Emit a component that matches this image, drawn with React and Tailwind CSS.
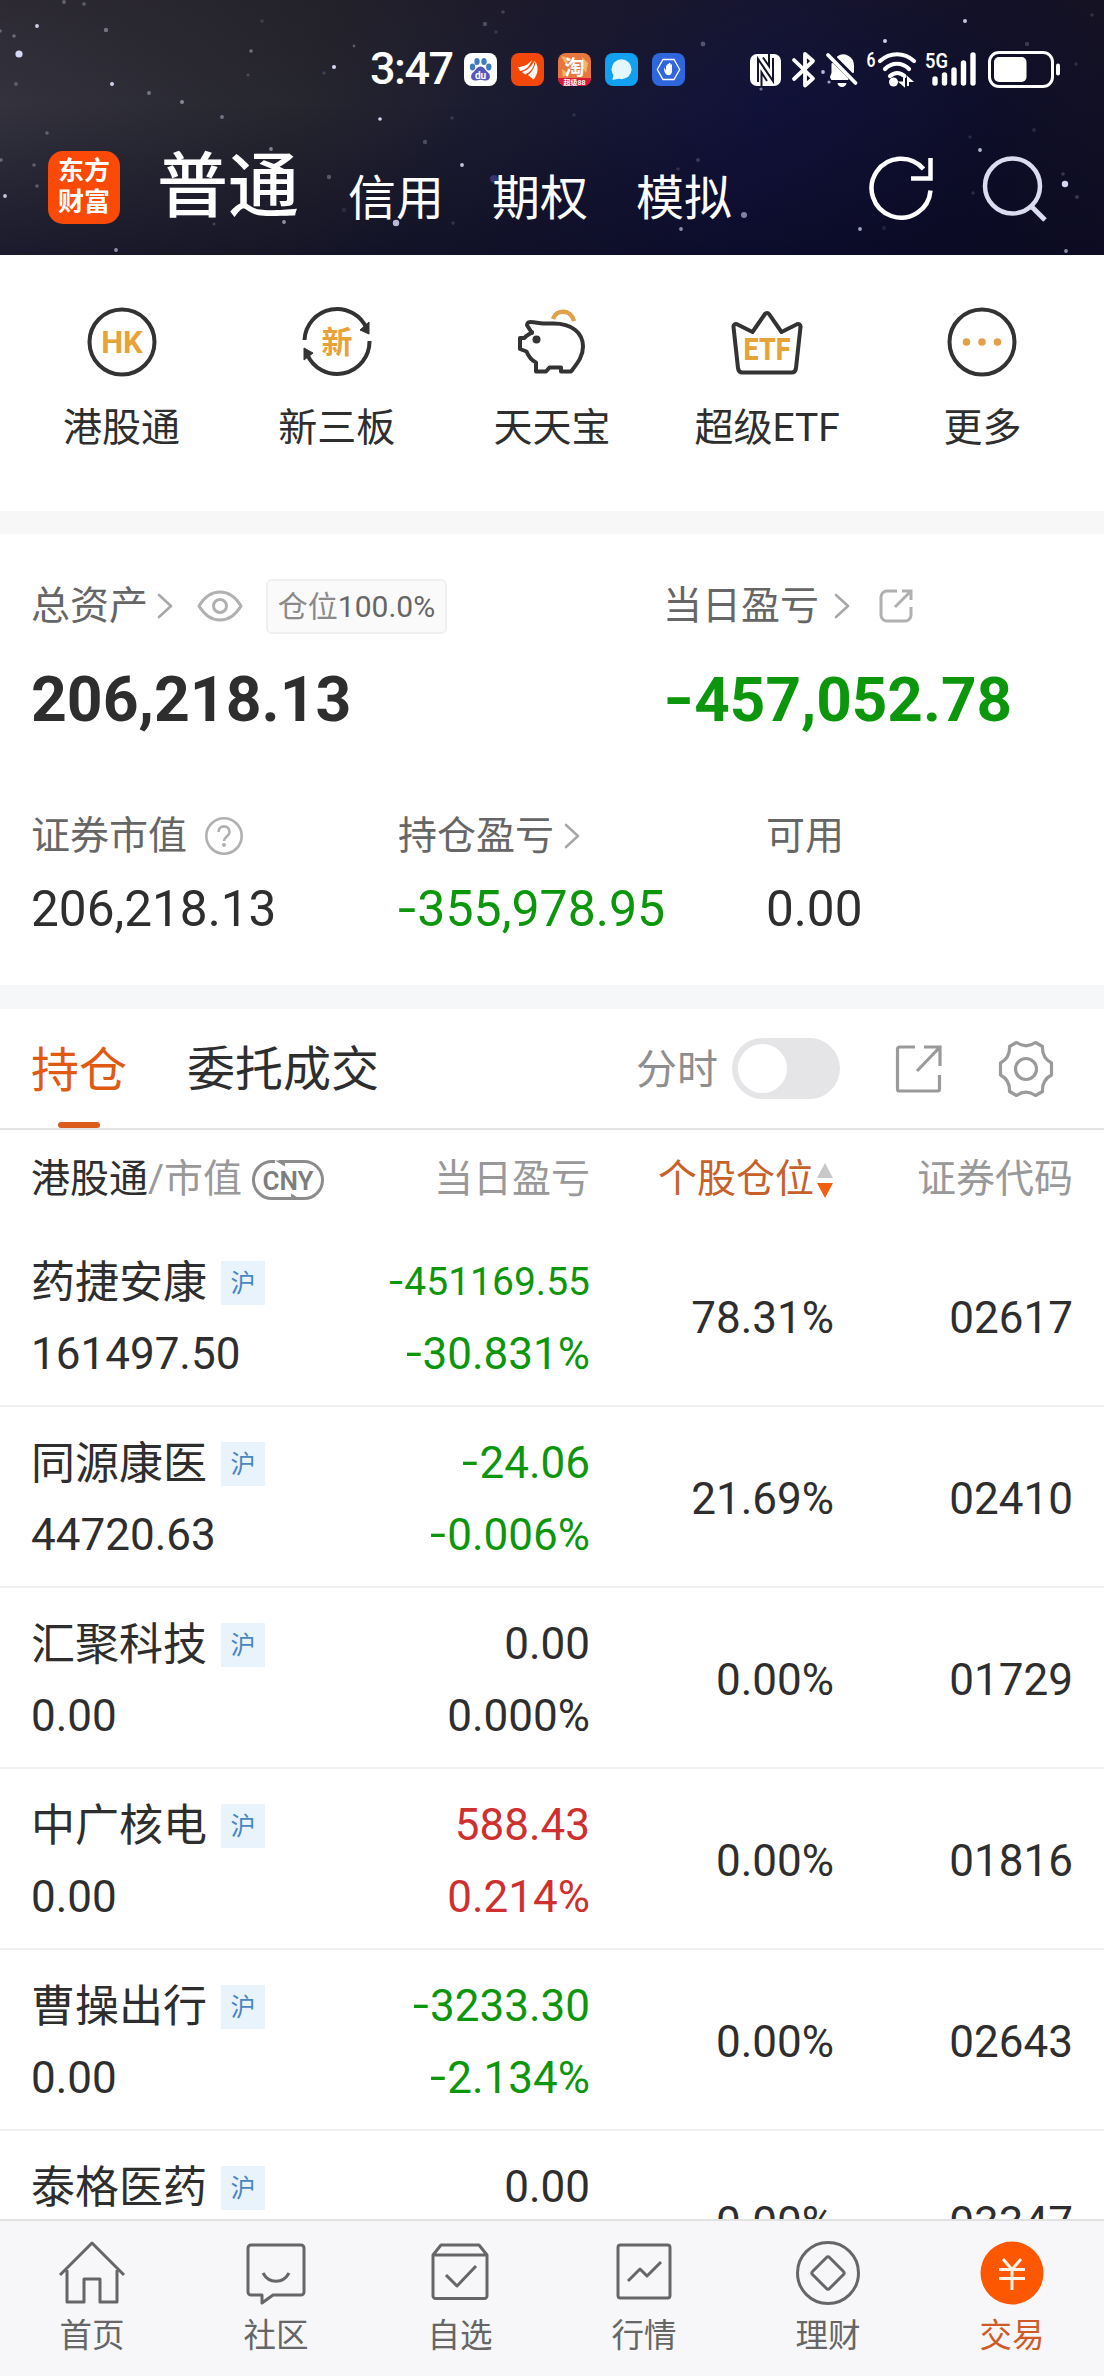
import React, { useState } from 'react';

// x, y, radius, opacity
const STARS = [
  [19, 54, 3.6, 0.95], [37, 26, 1.9, 0.9], [14, 36, 1.8, 0.35], [0, 31, 1.8, 0.35], [64, 2, 2, 0.3], [84, 4, 1.8, 0.3],
  [106, 30, 2.2, 0.4], [16, 84, 2, 0.25], [112, 84, 2, 0.9], [149, 93, 2, 0.4], [182, 102, 2, 0.5],
  [222, 117, 2, 0.4], [251, 51, 1.8, 0.4], [248, 75, 1.6, 0.2], [262, 21, 1.8, 0.15], [334, 67, 2, 0.95],
  [324, 73, 1.8, 0.15], [354, 46, 1.4, 0.3], [380, 119, 1.8, 0.95], [452, 118, 1.8, 0.15], [425, 142, 2.2, 0.25],
  [462, 165, 1.9, 0.85], [485, 24, 2.2, 0.25], [503, 12, 1.8, 0.2], [496, 32, 1.8, 0.15], [47, 133, 1.8, 0.3],
  [1, 160, 1.8, 0.35], [34, 165, 1.8, 0.3], [37, 186, 1.8, 0.3], [5, 196, 1.9, 0.85], [116, 250, 1.9, 0.6],
  [271, 149, 1.9, 0.5], [284, 156, 1.8, 0.4], [329, 177, 2.2, 0.3], [396, 223, 3.2, 0.8], [284, 222, 1.9, 0.6],
  [214, 224, 1.6, 0.2], [344, 210, 2.2, 0.1], [453, 223, 1.8, 0.15], [965, 21, 2, 0.85], [885, 41, 2, 0.9],
  [703, 44, 2.4, 0.3], [1027, 44, 2.2, 0.2], [1092, 15, 1.8, 0.15], [1076, 64, 1.8, 0.15], [980, 150, 1.9, 0.8],
  [1065, 184, 3.2, 0.95], [1077, 197, 2, 0.2], [1063, 174, 1.8, 0.2], [744, 215, 3, 0.55], [681, 229, 1.9, 0.6],
  [860, 229, 1.9, 0.7], [1066, 251, 1.9, 0.6], [761, 89, 1.6, 0.5], [823, 72, 1.9, 0.8], [829, 82, 1.6, 0.7],
  [698, 160, 2, 0.2], [678, 169, 1.8, 0.15], [574, 115, 1.8, 0.12], [970, 137, 1.8, 0.12], [1034, 130, 2, 0.12],
  [973, 193, 1.8, 0.15], [897, 158, 1.8, 0.4], [884, 228, 2.2, 0.1],
];

const ACCOUNTS = ['信用', '期权', '模拟'];

const HOLDINGS = [
  { name: '药捷安康', value: '161497.50', pnl: '-451169.55', rate: '-30.831%', ratio: '78.31%', code: '02617' },
  { name: '同源康医', value: '44720.63', pnl: '-24.06', rate: '-0.006%', ratio: '21.69%', code: '02410' },
  { name: '汇聚科技', value: '0.00', pnl: '0.00', rate: '0.000%', ratio: '0.00%', code: '01729' },
  { name: '中广核电', value: '0.00', pnl: '588.43', rate: '0.214%', ratio: '0.00%', code: '01816' },
  { name: '曹操出行', value: '0.00', pnl: '-3233.30', rate: '-2.134%', ratio: '0.00%', code: '02643' },
  { name: '泰格医药', pnl: '0.00', ratio: '0.00%', code: '03347' },
];

function pnlColor(v) {
  const n = parseFloat(v);
  if (n > 0) return 'text-[#cf2f2f]';
  if (n < 0) return 'text-[#0c960c]';
  return 'text-[#2e2e2e]';
}

// Negative amounts get a wider, slightly raised minus
function Amount({ children }) {
  if (!children || children[0] !== '-') return children;
  return (
    <>
      <span className="inline-block origin-left scale-x-130 -translate-y-[0.03em] mr-[0.11em]">-</span>
      {children.slice(1)}
    </>
  );
}

function Chevron({ className }) {
  return (
    <svg className={className} width="16" height="26" viewBox="0 0 16 26" fill="none" stroke="#a8a8a8" strokeWidth="2.6" strokeLinecap="round" strokeLinejoin="round">
      <path d="M2 2l12 11L2 24" />
    </svg>
  );
}

function NotificationApps() {
  return (
    <div className="flex gap-[14px]">
      <svg width="33" height="33" viewBox="0 0 33 33">
        <rect width="33" height="33" rx="8" fill="#fff" />
        <g fill="#3f7bbf">
          <ellipse cx="8.5" cy="14" rx="2.7" ry="3.4" />
          <ellipse cx="13" cy="8.5" rx="2.7" ry="3.5" />
          <ellipse cx="20" cy="8.5" rx="2.7" ry="3.5" />
          <ellipse cx="24.8" cy="14" rx="2.7" ry="3.4" />
        </g>
        <path d="M16.5 13.5c3.500 0 4.500 3.500 7.500 6 3 2.500 2.500 8-2 8-2.500 0-3.500-.8-5.500-.8s-3 .8-5.500.8c-4.500 0-5-5.500-2-8 3-2.500 4-6 7.500-6z" fill="#5658b8" />
        <text x="16.500" y="25.500" textAnchor="middle" fontSize="10" fontWeight="700" fill="#fff" fontFamily="Roboto">du</text>
      </svg>
      <svg width="33" height="33" viewBox="0 0 33 33">
        <rect width="33" height="33" rx="8" fill="#f4480b" />
        <path d="M7 14c5 0 10-2 14-7-2 6-6 10-12 11z" fill="#fff" />
        <path d="M11 19c6-2 10-6 12.500-11.500 0 6-3 11-9.500 14z" fill="#fff" />
        <path d="M17 22c4-3 7-8 7.500-13.500C28 15 27 21 22.500 26.500z" fill="#fff" />
      </svg>
      <svg width="33" height="33" viewBox="0 0 33 33">
        <rect width="33" height="33" rx="8" fill="#e8773f" />
        <path d="M3 3l9 2-4 7zM24 4l6 6-2 10-4-6zM4 16l6 4-5 4z" fill="#f7b565" />
        <path d="M0 25h33a8 8 0 0 1-8 8H8a8 8 0 0 1-8-8z" fill="#d8153a" />
        <text x="16.500" y="22" textAnchor="middle" fontSize="20" fontWeight="700" fill="#fff" fontFamily="Noto Sans CJK SC">淘</text>
        <text x="16.500" y="31.500" textAnchor="middle" fontSize="7" fontWeight="700" fill="#fff" fontFamily="Roboto, Noto Sans CJK SC">超级88</text>
      </svg>
      <svg width="33" height="33" viewBox="0 0 33 33">
        <rect width="33" height="33" rx="8" fill="#12a0f0" />
        <circle cx="16.500" cy="16.300" r="10" fill="#e2f7ff" />
        <path d="M8.500 21l-1 6 7-1.500z" fill="#e2f7ff" />
      </svg>
      <svg width="33" height="33" viewBox="0 0 33 33">
        <rect width="33" height="33" rx="8" fill="#2f66dc" />
        <path d="M11 6.500h11l5.700 10L22 26.500H11l-5.700-10z" fill="none" stroke="#fff" strokeWidth="1.300" />
        <path d="M12 14.500l2 3v-5h1.300v-1.500h1.500v-1h1.600v1.500H20V18c0 2.500-1.300 4.200-3.600 4.200-2.400 0-4.400-2.700-4.400-7.700z" fill="#fff" />
      </svg>
    </div>
  );
}

function SystemIcons() {
  return (
    <svg width="312" height="40" viewBox="750 48 312 40" fill="none" stroke="#fff">
      {/* NFC */}
      <rect x="750" y="53" width="31" height="32" rx="7" fill="#fff" stroke="none" />
      <path d="M758 81V58l15 22V57" stroke="#14142a" strokeWidth="2" />
      <path d="M761.500 85v-13.500l5.500 8.500M769 52v13l-6-8.500" stroke="#14142a" strokeWidth="2" />
      {/* Bluetooth */}
      <path d="M794 59l19 18.500-8 7V53l8 7-19 18" strokeWidth="3.800" strokeLinejoin="round" strokeLinecap="round" />
      {/* Muted bell */}
      <path d="M831 76l1.500-4V63l15 15h-15.500zM838 56c6-4 15 0 15 8.500V71z" fill="#fff" strokeWidth="2" strokeLinejoin="round" />
      <path d="M828 54l27.500 28" strokeWidth="3.800" strokeLinecap="round" />
      <path d="M837.500 82h9a4.500 4 0 0 1-9 0z" fill="#fff" stroke="none" />
      {/* Wi-Fi 6 */}
      <text x="866.500" y="66" fontSize="20" fontWeight="600" fill="#fff" stroke="none" fontFamily="Roboto" textLength="9" lengthAdjust="spacingAndGlyphs">6</text>
      <path d="M880 60c10-9 24-9 34 0M885 68c7-7 17-7 24 0M890 75c4.500-4 10-4 14.500 0" strokeWidth="4.200" strokeLinecap="round" />
      <circle cx="893.500" cy="81" r="4.500" fill="#fff" stroke="none" />
      <path d="M904 76.500v8l-3.500-3h3.500zM908 85v-8l3.500 3H908z" strokeWidth="2" />
      {/* Mobile signal */}
      <text x="925" y="67" fontSize="20" fontWeight="600" fill="#fff" stroke="none" fontFamily="Roboto" textLength="23" lengthAdjust="spacingAndGlyphs">5G</text>
      <path d="M935 78v4M944.500 74v8M954 69v13M963.500 62v20M973 54v28" strokeWidth="5.400" strokeLinecap="round" />
      {/* Battery */}
      <rect x="989.500" y="51.500" width="63" height="34" rx="9.500" strokeWidth="3" />
      <rect x="994" y="56" width="32.500" height="25" rx="5" fill="#fff" stroke="none" />
      <path d="M1058 64.500v8" strokeWidth="4" strokeLinecap="round" />
    </svg>
  );
}

function Header() {
  return (
    <header className="relative h-[255px] bg-[linear-gradient(100deg,#34333e_0%,#26262f_28%,#191931_48%,#11123a_68%,#0e0e2a_88%,#121022_100%)] text-white overflow-hidden">
      <div className="absolute inset-0 bg-[linear-gradient(180deg,rgba(30,24,32,0.35)_0%,rgba(20,18,40,0)_40%,rgba(8,8,32,0.55)_100%)]" />
      <svg className="absolute inset-0" width="1104" height="255" fill="#dfe3ff">
        {STARS.map(([x, y, r, o], i) => (
          <circle key={i} cx={x} cy={y} r={r} opacity={o} />
        ))}
        <circle cx="494" cy="179" r="4" fill="#5b50b0" opacity="0.5" />
      </svg>

      <div className="relative flex items-center h-10 mt-[49px] pl-[370px]">
        <span className="w-[94px] text-[45px] leading-10 font-medium tracking-[-1.500px]">3:47</span>
        <NotificationApps />
        <div className="ml-[65px]"><SystemIcons /></div>
      </div>

      <div className="relative flex items-center h-[90px] mt-[53px] pl-12">
        <div className="w-[72px] h-[73px] rounded-[15px] bg-[#fb4a08] flex flex-col items-center justify-center text-[26px] leading-[31px] font-bold">
          <span>东方</span>
          <span>财富</span>
        </div>
        <h1 className="ml-[37px] text-[71px] leading-[90px] font-medium">普通</h1>
        <nav className="flex gap-12 ml-[49px] mt-[23px] text-[48px] leading-[60px]">
          {ACCOUNTS.map(a => <span key={a}>{a}</span>)}
        </nav>
        <svg className="ml-[136px] mt-[2px]" width="66" height="70" viewBox="0 0 66 70" fill="none" stroke="#fff" strokeWidth="4.500">
          <path d="M62.500 37.500a29.500 29.500 0 1 1-7-21.500" />
          <path d="M62.500 5v20.500H43" />
        </svg>
        <svg className="ml-[48px] mt-[1px]" width="66" height="70" viewBox="0 0 66 70" fill="none" stroke="#dcdcf0" strokeWidth="4.500">
          <circle cx="30.500" cy="33" r="27.500" />
          <path d="M49 53l14 14" strokeWidth="5" />
        </svg>
      </div>
    </header>
  );
}

const SHORTCUTS = [
  {
    label: '港股通',
    icon: (
      <>
        <circle cx="36" cy="36" r="32.500" />
        <text x="36" y="47" textAnchor="middle" fontSize="31" fontWeight="700" fill="#e8a23a" stroke="none" fontFamily="Roboto">HK</text>
      </>
    ),
  },
  {
    label: '新三板',
    icon: (
      <>
        <path d="M3.500 34A32.500 32.500 0 0 1 66 23M68.500 35A32.500 32.500 0 0 1 6 48" />
        <path d="M68 16v12l-9-4zM3 54V42l9 5z" fill="#333" strokeWidth="1" />
        <text x="36" y="47" textAnchor="middle" fontSize="31" fontWeight="700" fill="#e8a23a" stroke="none" fontFamily="Noto Sans CJK SC">新</text>
      </>
    ),
  },
  {
    label: '天天宝',
    icon: (
      <>
        <path d="M37 13c3-10 18-10 21 2" stroke="#e3a04a" strokeWidth="4.500" />
        <path d="M16 27l-4.500-7c-1-2 0-4 3-4 5 0 8 1.500 13 1.500h10c18 0 29.500 9 29.500 23 0 10-5 16-12 25H45v-4H33.500l-3.500 4H20v-9c-4-2-7.500-6-9.500-11L4 43V32h4.500c2-3 4.500-3 7.500-6z" />
        <circle cx="20.500" cy="33.500" r="4" fill="#333" stroke="none" />
      </>
    ),
  },
  {
    label: '超级ETF',
    icon: (
      <>
        <path d="M2.500 21c-.3-2 1.500-3.500 3.500-2.800L21.500 26 34 8c1-1.500 3-1.500 4 0l12.500 18L66 18.200c2-.7 3.800.8 3.500 2.800L65 62c-.3 3-2 4.500-4.500 4.500h-49C9 66.500 7.300 65 7 62z" />
        <text x="36" y="54" textAnchor="middle" fontSize="32" fontWeight="800" fill="#e8a23a" stroke="none" fontFamily="Roboto" textLength="47" lengthAdjust="spacingAndGlyphs">ETF</text>
      </>
    ),
  },
  {
    label: '更多',
    icon: (
      <>
        <circle cx="36" cy="36" r="32.500" />
        <g fill="#e3a04a" stroke="none">
          <circle cx="20.500" cy="36" r="3.800" />
          <circle cx="36" cy="36" r="3.800" />
          <circle cx="51.500" cy="36" r="3.800" />
        </g>
      </>
    ),
  },
];

function Shortcuts() {
  return (
    <section className="grid grid-cols-5 h-[256px] px-[14px] pt-[51px]">
      {SHORTCUTS.map(s => (
        <div key={s.label} className="flex flex-col items-center">
          <svg width="72" height="72" viewBox="0 0 72 72" fill="none" stroke="#333" strokeWidth="4" strokeLinejoin="round">{s.icon}</svg>
          <span className="mt-[22px] text-[39px] leading-[56px] text-[#2e2e2e]">{s.label}</span>
        </div>
      ))}
    </section>
  );
}

function Assets() {
  return (
    <section className="h-[451px] pl-[31px] pt-[44px]">
      <div className="flex">
        <div className="w-[632px]">
          <div className="flex items-center h-[56px] text-[39px] text-[#666]">
            <span>总资产</span>
            <Chevron className="ml-[9px]" />
            <svg className="ml-[24px]" width="46" height="32" viewBox="0 0 46 32" fill="none" stroke="#b0b0b0" strokeWidth="3">
              <path d="M2 16C8 6 15 2 23 2s15 4 21 14c-6 10-13 14-21 14S8 26 2 16z" strokeLinejoin="round" />
              <circle cx="23" cy="16" r="6.500" />
            </svg>
            <span className="ml-[23px] w-[181px] h-[55px] flex items-center justify-center whitespace-nowrap rounded-md border-2 border-[#efefef] bg-[#fafafa] text-[30px] text-[#666]">
              <span className="text-[#8a8a8a]">仓位</span>100.0%
            </span>
          </div>
          <div className="mt-[29px] text-[62.500px] leading-[74px] font-bold text-[#2e2e2e]">206,218.13</div>
        </div>
        <div>
          <div className="flex items-center h-[56px] text-[39px] text-[#666]">
            <span>当日盈亏</span>
            <Chevron className="ml-[15px]" />
            <svg className="ml-[28px]" width="36" height="36" viewBox="0 0 36 36" fill="none" stroke="#b0b0b0" strokeWidth="3">
              <path d="M19 3H9a6 6 0 0 0-6 6v18a6 6 0 0 0 6 6h18a6 6 0 0 0 6-6v-8" />
              <path d="M24 3h9v9M33 3L17 19" />
            </svg>
          </div>
          <div className="mt-[29px] text-[62px] leading-[74px] font-bold text-[#0c960c]"><Amount>-457,052.78</Amount></div>
        </div>
      </div>

      <div className="grid grid-cols-[367px_368px_1fr] mt-[71px]">
        <div>
          <div className="flex items-center h-[56px] text-[39px] text-[#666]">
            <span>证券市值</span>
            <svg className="ml-[17px]" width="40" height="40" viewBox="0 0 40 40" fill="none" stroke="#b0b0b0" strokeWidth="2.600">
              <circle cx="20" cy="20" r="17.700" />
              <path d="M14.500 16c0-7.500 11-7.500 11 0 0 4.500-5.500 4.500-5.500 9" />
              <circle cx="20" cy="29" r="2" fill="#b0b0b0" stroke="none" />
            </svg>
          </div>
          <div className="mt-[15px] text-[49.500px] leading-[60px] text-[#2e2e2e]">206,218.13</div>
        </div>
        <div>
          <div className="flex items-center h-[56px] text-[39px] text-[#666]">
            <span>持仓盈亏</span>
            <Chevron className="ml-[10px]" />
          </div>
          <div className="mt-[15px] text-[50px] leading-[60px] text-[#0c960c]"><Amount>-355,978.95</Amount></div>
        </div>
        <div>
          <div className="flex items-center h-[56px] text-[39px] text-[#666]">可用</div>
          <div className="mt-[15px] text-[49.500px] leading-[60px] text-[#2e2e2e]">0.00</div>
        </div>
      </div>
    </section>
  );
}

function Tabs() {
  const [realtime, setRealtime] = useState(false);

  return (
    <div className="flex items-center h-[121px] pl-[31px] border-b-2 border-[#e2e4e6]">
      <div className="flex flex-col items-center h-full pt-[31px]">
        <span className="text-[48px] leading-[62px] text-[#e05a14]">持仓</span>
        <span className="mt-auto w-[42px] h-[6px] rounded-full bg-[#dc5c1e]" />
      </div>
      <span className="ml-[60px] mt-[3px] text-[48px] leading-[62px] text-[#2e2e2e]">委托成交</span>
      <span className="ml-[257px] mt-[2px] text-[41px] leading-[60px] text-[#8e8e8e]">分时</span>
      <button onClick={() => setRealtime(!realtime)} className="ml-[14px] w-[108px] h-[61px] p-[6px] rounded-full bg-[#e5e5e8]">
        <span className={`block w-[49px] h-[49px] rounded-full bg-white ${realtime ? 'ml-auto' : ''}`} />
      </button>
      <svg className="ml-[55px]" width="48" height="50" viewBox="0 0 48 50" fill="none" stroke="#9a9a9a" strokeWidth="3.200">
        <path d="M20 3H4.500a2 2 0 0 0-2 2v40a2 2 0 0 0 2 2h38a2 2 0 0 0 2-2V31" />
        <path d="M29 3h16v19M45 3L22 27" />
      </svg>
      <svg className="ml-[55px]" width="56" height="58" viewBox="0 0 56 58" fill="none" stroke="#9a9a9a" strokeWidth="3.200" strokeLinejoin="round">
        <path d="M18.500 2.500c6.500 4.500 12.500 4.500 19 0l7 4c-.5 8 2.500 13 9 16.500v12c-6.500 3.500-9.500 8.500-9 16.500l-7 4c-6.500-4.500-12.500-4.500-19 0l-7-4c.5-8-2.500-13-9-16.500V23c6.500-3.500 9.500-8.500 9-16.500z" />
        <circle cx="28" cy="29" r="10.500" />
      </svg>
    </div>
  );
}

function HoldingsTable() {
  return (
    <section className="h-[1089px] overflow-hidden">
      <div className="grid grid-cols-[300px_259px_244px_239px] items-center h-[96px] px-[31px] pt-[3px] text-[39px] text-[#999]">
        <div className="flex items-center whitespace-nowrap">
          <span className="text-[#2e2e2e]">港股通</span>/市值
          <svg className="ml-[9px]" width="74" height="42" viewBox="0 0 74 42" fill="none" stroke="#8c8c8c" strokeWidth="3">
            <path d="M24 2.500h-3a18.500 18.500 0 0 0 0 37h29M50 39.500h3a18.500 18.500 0 0 0 0-37H28" />
            <path d="M24 1.500h10v6zM50 40.500H40v-6z" fill="#8c8c8c" stroke="none" />
            <text x="37" y="30.500" textAnchor="middle" fontSize="26" fontWeight="600" fill="#7d7d7d" stroke="none" fontFamily="Roboto">CNY</text>
          </svg>
        </div>
        <span className="text-right">当日盈亏</span>
        <div className="flex items-center justify-end text-[#c8602a]">
          个股仓位
          <svg className="ml-[2px]" width="18" height="38" viewBox="0 0 18 38">
            <path d="M9 2l8 15H1z" fill="#c8c8c8" />
            <path d="M1 22h16L9 37z" fill="#f2600f" />
          </svg>
        </div>
        <span className="text-right">证券代码</span>
      </div>

      {HOLDINGS.map(h => (
        <div key={h.code} className="grid grid-cols-[300px_259px_244px_239px] items-center h-[181px] px-[31px] pt-[4px] border-b-2 border-[#eef0f0] text-[44px] leading-[72px] text-[#2e2e2e]">
          <div>
            <div className="flex items-center h-[72px] pt-[2px]">
              {h.name}
              <span className="ml-[14px] w-11 h-11 bg-[#e8f3fc] text-center text-[25px] leading-[45px] text-[#4a86c0]">沪</span>
            </div>
            <div className="h-[72px]">{h.value}</div>
          </div>
          <div className={`text-right ${pnlColor(h.pnl)}`}>
            <div className={`h-[72px] ${h.pnl.length > 9 ? 'text-[39px]' : ''}`}><Amount>{h.pnl}</Amount></div>
            <div className="h-[72px]"><Amount>{h.rate}</Amount></div>
          </div>
          <span className="text-right">{h.ratio}</span>
          <span className="text-right">{h.code}</span>
        </div>
      ))}
    </section>
  );
}

const NAV = [
  {
    label: '首页',
    icon: <path d="M2 36L34 4l32 32M9 31v32h17V40h16v23h17V31" />,
  },
  {
    label: '社区',
    icon: (
      <>
        <path d="M9 6h50a3 3 0 0 1 3 3v44a3 3 0 0 1-3 3H31l-11 8v-8H9a3 3 0 0 1-3-3V9a3 3 0 0 1 3-3z" />
        <path d="M21 34c6 11 20 11 26 0" />
      </>
    ),
  },
  {
    label: '自选',
    icon: (
      <>
        <path d="M7 16l8-10h38l8 10v41a2.500 2.500 0 0 1-2.500 2.500h-49A2.500 2.500 0 0 1 7 57zM7 16h54" />
        <path d="M20 36l11 11 19-20" />
      </>
    ),
  },
  {
    label: '行情',
    icon: (
      <>
        <rect x="8" y="6" width="52" height="53" rx="2.500" />
        <path d="M18 42l12-12 7 7 14-14" />
      </>
    ),
  },
  {
    label: '理财',
    icon: (
      <>
        <circle cx="34" cy="34" r="30.500" />
        <path d="M32.500 18.500a2 2 0 0 1 3 0l14 14a2 2 0 0 1 0 3l-14 14a2 2 0 0 1-3 0l-14-14a2 2 0 0 1 0-3z" />
      </>
    ),
  },
  {
    label: '交易',
    active: true,
    icon: (
      <>
        <circle cx="34" cy="34" r="31.500" fill="#fd5702" stroke="none" />
        <path d="M25 20l9 10.500L43 20M21 30.500h26M21 39.500h26M34 30.500V51" stroke="#fff3e6" strokeWidth="3" />
      </>
    ),
  },
];

function BottomNav() {
  return (
    <nav className="grid grid-cols-6 h-[157px] pt-[18px] bg-[#f7f7f9] border-t-2 border-[#e2e2e2]">
      {NAV.map(n => (
        <div key={n.label} className="flex flex-col items-center">
          <svg width="68" height="68" viewBox="0 0 68 68" fill="none" stroke="#666" strokeWidth="3" strokeLinejoin="round">{n.icon}</svg>
          <span className={`mt-[9px] text-[32.500px] leading-[40px] ${n.active ? 'text-[#cf5c28]' : 'text-[#666]'}`}>{n.label}</span>
        </div>
      ))}
    </nav>
  );
}

export default function App() {
  return (
    <div className="w-[1104px] h-[2376px] overflow-hidden bg-white font-['Roboto','Noto_Sans_CJK_SC',sans-serif]">
      <Header />
      <Shortcuts />
      <div className="h-[23px] bg-[#f7f7f7]" />
      <Assets />
      <div className="h-[24px] bg-[#f6f7f9]" />
      <Tabs />
      <HoldingsTable />
      <BottomNav />
    </div>
  );
}
